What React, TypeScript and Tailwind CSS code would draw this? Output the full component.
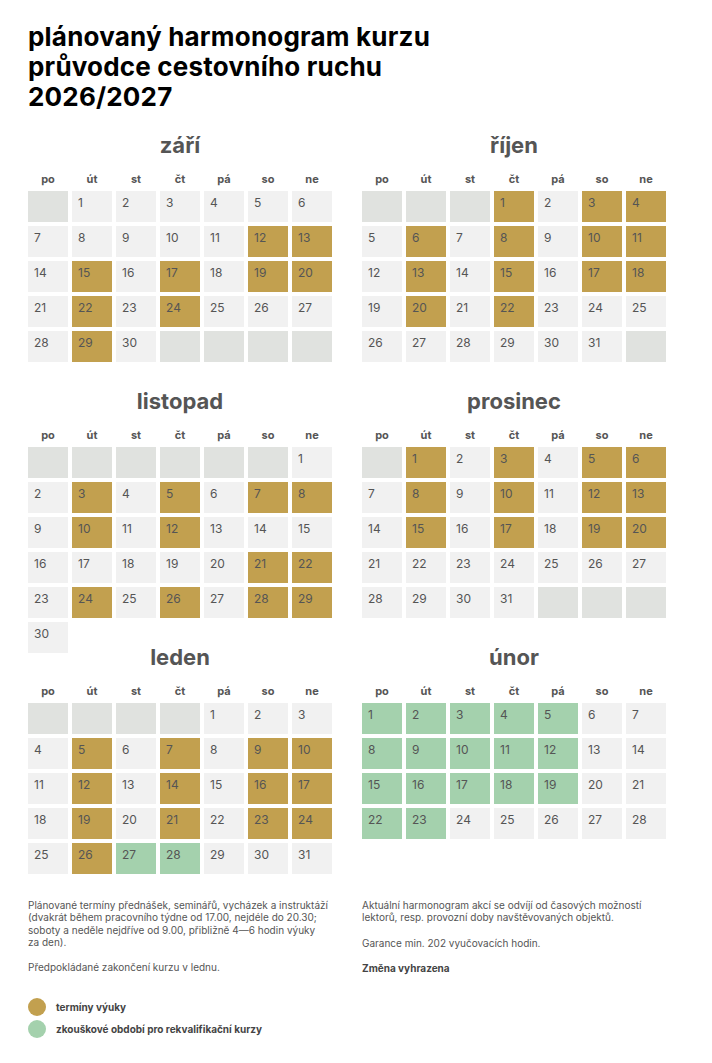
const DAYS = ["po", "út", "st", "čt", "pá", "so", "ne"]

type Month = {
  name: string
  offset: number
  days: number
  fill: boolean
  gold: number[]
  green: number[]
}

const MONTHS: Month[] = [
  { name: "září", offset: 1, days: 30, fill: true, gold: [12, 13, 15, 17, 19, 20, 22, 24, 29], green: [] },
  { name: "říjen", offset: 3, days: 31, fill: true, gold: [1, 3, 4, 6, 8, 10, 11, 13, 15, 17, 18, 20, 22], green: [] },
  { name: "listopad", offset: 6, days: 30, fill: false, gold: [3, 5, 7, 8, 10, 12, 21, 22, 24, 26, 28, 29], green: [] },
  { name: "prosinec", offset: 1, days: 31, fill: true, gold: [1, 3, 5, 6, 8, 10, 12, 13, 15, 17, 19, 20], green: [] },
  { name: "leden", offset: 4, days: 31, fill: true, gold: [5, 7, 9, 10, 12, 14, 16, 17, 19, 21, 23, 24, 26], green: [27, 28] },
  { name: "únor", offset: 0, days: 28, fill: true, gold: [], green: [1, 2, 3, 4, 5, 8, 9, 10, 11, 12, 15, 16, 17, 18, 19, 22, 23] },
]

function MonthBlock({ m }: { m: Month }) {
  const cells: (number | null)[] = []
  for (let i = 0; i < m.offset; i++) cells.push(null)
  for (let d = 1; d <= m.days; d++) cells.push(d)
  if (m.fill) while (cells.length % 7 !== 0) cells.push(null)

  return (
    <div className="h-[256px] w-[304px]">
      <h2 className="text-center text-[22px] leading-[28px] font-bold text-[#555555]">{m.name}</h2>
      <div className="mt-[12px] grid grid-cols-[repeat(7,40px)] gap-x-[4px]">
        {DAYS.map((d) => (
          <div key={d} className="text-center text-[11px] leading-[16px] font-bold text-[#555555]">{d}</div>
        ))}
      </div>
      <div className="mt-[4px] grid grid-cols-[repeat(7,40px)] auto-rows-[31px] gap-[4px]">
        {cells.map((d, i) => {
          if (d === null) return <div key={i} className="bg-[#e0e2df]" />
          const bg = m.gold.includes(d) ? "bg-[#c2a04f]" : m.green.includes(d) ? "bg-[#a4d1ad]" : "bg-[#f1f1f1]"
          return (
            <div key={i} className={`${bg} pl-[6px] pt-[4px] text-[12px] leading-[16px] text-[#555555]`}>
              {d}
            </div>
          )
        })}
      </div>
    </div>
  )
}

export default function App() {
  return (
    <div className="min-h-[1063px] w-[712px] bg-white font-['Inter',sans-serif]">
      <div className="px-[28px] pt-[22px]">
        <h1 className="text-[26px] leading-[30px] font-bold tracking-[0.2px] text-black">
          plánovaný harmonogram kurzu
          <br />
          průvodce cestovního ruchu
          <br />
          2026/2027
        </h1>

        <div className="mt-[19px] grid grid-cols-[304px_304px] gap-x-[30px]">
          {MONTHS.map((m) => (
            <MonthBlock key={m.name} m={m} />
          ))}
        </div>

        <div className="grid grid-cols-[304px_304px] gap-x-[30px] text-[10px] leading-[12.3px] text-[#555555]">
          <div>
            <p className="whitespace-nowrap">
              Plánované termíny přednášek, seminářů, vycházek a instruktáží
              <br />
              (dvakrát během pracovního týdne od 17.00, nejdéle do 20.30;
              <br />
              soboty a neděle nejdříve od 9.00, přibližně 4—6 hodin výuky
              <br />
              za den).
            </p>
            <p className="mt-[13px]">Předpokládané zakončení kurzu v lednu.</p>
            <div className="mt-[25px] flex flex-col gap-[4px] font-bold text-[#444444]">
              <div className="flex items-center gap-[10px]">
                <span className="h-[18px] w-[18px] rounded-full bg-[#c2a04f]" />
                termíny výuky
              </div>
              <div className="flex items-center gap-[10px]">
                <span className="h-[18px] w-[18px] rounded-full bg-[#a4d1ad]" />
                zkouškové období pro rekvalifikační kurzy
              </div>
            </div>
          </div>
          <div>
            <p className="whitespace-nowrap">
              Aktuální harmonogram akcí se odvíjí od časových možností
              <br />
              lektorů, resp. provozní doby navštěvovaných objektů.
            </p>
            <p className="mt-[13px]">Garance min. 202 vyučovacích hodin.</p>
            <p className="mt-[13px] font-bold text-[#444444]">Změna vyhrazena</p>
          </div>
        </div>
      </div>
    </div>
  )
}
